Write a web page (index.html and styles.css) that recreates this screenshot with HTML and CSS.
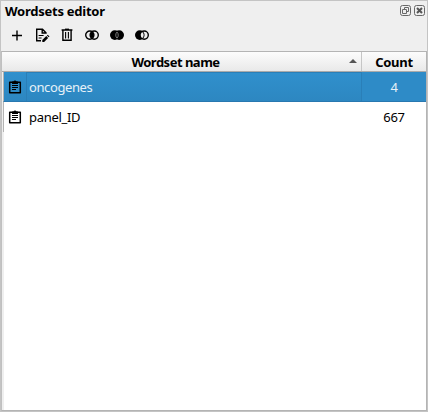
FILE: index.html
```html
<!DOCTYPE html>
<html lang="en">
<head>
<meta charset="utf-8">
<title>Wordsets editor</title>
<link rel="stylesheet" href="styles.css">
</head>
<body>
<svg width="0" height="0" class="defs"><defs>
<symbol id="clipboard" viewBox="0 0 14 16"><path d="M1.7 3.2h10.6v10.6H1.7z" fill="none" stroke="#000" stroke-width="1.5" stroke-linejoin="round"/><path d="M4 5V2.6h1.4a1.7 1.7 0 0 1 3.2 0H10V5zM4 6h6v1H4zM4 8h6v1H4zM4 10h4v1H4z"/></symbol>
</defs></svg>
<main class="dock">
  <header class="title"><h1>Wordsets editor</h1>
    <div class="buttons">
      <svg width="11" height="11" viewBox="0 0 11 11"><rect x=".5" y=".5" width="10" height="10" rx="2"/><path d="M4.5 4.5v-2h4v4h-2M2.5 4.5h4v4h-4z"/></svg>
      <svg width="11" height="11" viewBox="0 0 11 11"><rect x=".5" y=".5" width="10" height="10" rx="2"/><path class="cross" d="M3 3l5 5M8 3L3 8"/></svg>
    </div>
  </header>
  <nav class="tools">
    <svg viewBox="0 0 16 16"><path class="line" d="M8 3.5v10M3 8.5h10"/></svg>
    <svg viewBox="0 0 16 16"><path class="line" d="M7 13.8H2.7V2.2h5.8l3.5 3.5v1M8.2 2.4v3.6H12"/><path class="thin" d="M4.6 8.5h5M4.6 11h3"/><path d="M8.3 14.9v-1.8l4-4 1.8 1.8-4 4zM12.9 8.5l.8-.8 1.8 1.8-.8.8z"/></svg>
    <svg viewBox="0 0 16 16"><path class="line" d="M2.6 3h10.8M3.9 3.5v9.8h8.2V3.5"/><path class="thin" d="M6.6 5v6.5M9.4 5v6.5"/><path d="M6 1.6h4V3H6z"/></svg>
    <svg viewBox="0 0 16 16"><path d="M8 4.6a4.2 4.2 0 0 1 0 7 4.2 4.2 0 0 1 0-7"/><circle class="ring" cx="5.8" cy="8.1" r="4.1"/><circle class="ring" cx="10.2" cy="8.1" r="4.1"/></svg>
    <svg viewBox="0 0 16 16"><circle cx="5.8" cy="8.1" r="4.8"/><circle cx="10.2" cy="8.1" r="4.8"/><path class="cut" d="M8 5.1a4.2 4.2 0 0 1 0 6 4.2 4.2 0 0 1 0-6z"/></svg>
    <svg viewBox="0 0 16 16"><circle cx="5.8" cy="8.1" r="4.8"/><circle cx="10.2" cy="8.1" r="4.1" class="ring"/><path class="hole" d="M8.2 4.9a4.2 4.2 0 0 1 0 6.4 4.2 4.2 0 0 1 0-6.4z"/></svg>
  </nav>
  <section class="table">
    <div class="head"><div class="name">Wordset name<svg class="sort" width="8" height="4" viewBox="0 0 8 4"><path d="M0 4L4 0l4 4z"/></svg></div><div class="count">Count</div></div>
    <div class="row selected"><div class="icon"><svg><use href="#clipboard"/></svg></div><div class="label">oncogenes</div><div class="count">4</div></div>
    <div class="row"><div class="icon"><svg><use href="#clipboard"/></svg></div><div class="label">panel_ID</div><div class="count">667</div></div>
  </section>
</main>
</body>
</html>
```
FILE: styles.css
```css
* { box-sizing: border-box; }
body { margin: 0; font: 13px/18px "Noto Sans", sans-serif; color: #000; }
.defs { position: absolute; }
.dock { width: 428px; height: 412px; display: flex; flex-direction: column; background: #efefef; border: 1px solid #c4c4c4; }
.title { height: 21px; display: flex; justify-content: space-between; padding: 1px 2px 0 4px; }
h1 { margin: 0; font-size: 13px; line-height: 18px; font-weight: 700; letter-spacing: -.25px; }
.buttons { display: flex; gap: 3px; padding-top: 3px; }
.buttons svg { fill: none; stroke: #686868; }
.buttons .cross { stroke: #555; stroke-width: 2; }
.tools { height: 29px; padding: 5px 0 0 8px; display: flex; gap: 9px; }
.tools svg { width: 16px; height: 16px; }
.line { fill: none; stroke: #000; stroke-width: 1.4; }
.thin { fill: none; stroke: #000; stroke-width: 1.1; }
.ring { fill: none; stroke: #000; stroke-width: 1.4; }
.cut { fill: #000; stroke: #aaa; stroke-width: .7; }
.hole { fill: #efefef; }
.table { flex: 1; border: 1px solid #b4b4b4; border-left-color: #c0c0c0; background: linear-gradient(90deg, #efefef 2px, #fff 2px); }
.head { height: 20px; display: flex; background: linear-gradient(#fcfcfc, #e9e9e9); border-bottom: 1px solid #aaa; font-weight: 700; line-height: 21px; text-align: center; letter-spacing: -.5px; }
.name { position: relative; width: 360px; padding-right: 12px; border-right: 1px solid #c6c6c6; }
.sort { position: absolute; right: 4px; top: 7px; fill: #555; }
.count { flex: 1; text-align: center; }
.head .count { letter-spacing: -.3px; }
.row { height: 30px; display: flex; line-height: 30px; border-left: 1px solid #b4b4b4; margin-left: 1px; background: #fff; }
.row .count { letter-spacing: -.3px; }
.selected { background: linear-gradient(#3090cd, #2d87c1); color: #e6f1f8; border-bottom: 1px solid #2878b0; }
.selected .count { background: #2e8bc7; }
.selected .label { border: 1px solid #2a7fb8; border-width: 1px 1px 0; line-height: 29px; padding-left: 2px; letter-spacing: -.4px; }
.icon { width: 22px; padding: 7px 0 0 4px; line-height: 0; }
.icon svg { width: 14px; height: 16px; }
.label { width: 336px; padding-left: 3px; letter-spacing: -.3px; }
```
